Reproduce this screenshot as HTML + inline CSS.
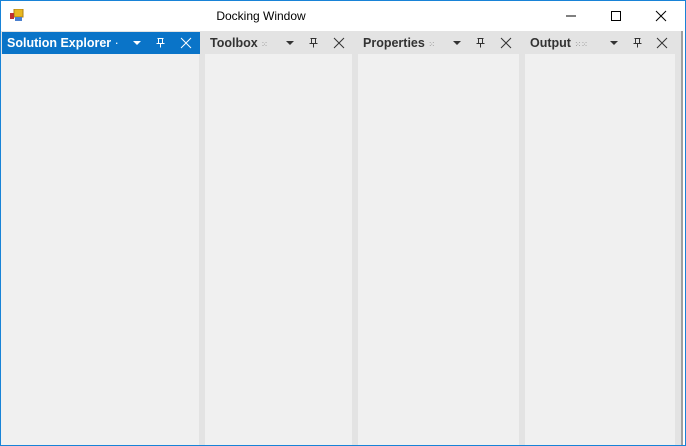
<!DOCTYPE html>
<html><head><style>
*{margin:0;padding:0;box-sizing:border-box}
body{width:686px;height:446px;overflow:hidden;background:#fff;font-family:"Liberation Sans",sans-serif;position:relative}
.win{position:absolute;left:0;top:0;width:686px;height:446px;border:1px solid #1883d7}
.t{position:absolute;top:9px;left:0;width:522px;text-align:center;font-size:12px;color:#000}
.area{position:absolute;left:1px;top:31px;width:684px;height:414px;background:#e3e3e3}
.hd{position:absolute;top:1px;height:22px;font-size:12.5px;font-weight:bold;color:#333;line-height:22px;padding-left:5px}
.body{position:absolute;top:23px;bottom:0;background:#f0f0f0}
</style></head><body>
<div class="win"></div>
<svg style="position:absolute;left:10px;top:9px" width="14" height="13"><rect x="4" y="0" width="9" height="8" fill="#e8b820" stroke="#b08010"/><rect x="0" y="4" width="4" height="6" fill="#c03030"/><rect x="5" y="8" width="7" height="4" fill="#4a80d0"/></svg>
<div class="t">Docking Window</div>
<svg style="position:absolute;left:560px;top:8px" width="112" height="16" stroke="#000" fill="none"><path d="M6 8h10"/><path d="M51.5 3.5h9v9h-9z"/><path d="M96 3l10 10M106 3l-10 10"/></svg>
<div class="area">
 <div class="hd" style="left:1px;width:198px;background:#0a74c8;color:#fff">Solution Explorer <span style="font-weight:normal">·</span></div>
 <div class="body" style="left:0;width:198px"></div>
 <div class="hd" style="left:204px;width:148px">Toolbox <span style="font-weight:normal;font-size:8px;color:#888">⁙</span></div>
 <div class="body" style="left:204px;width:147px"></div>
 <div class="hd" style="left:357px;width:162px">Properties <span style="font-weight:normal;font-size:8px;color:#888">⁙</span></div>
 <div class="body" style="left:357px;width:161px"></div>
 <div class="hd" style="left:524px;width:151px">Output <span style="font-weight:normal;font-size:8px;color:#888">⁙⁙</span></div>
 <div class="body" style="left:524px;width:150px"></div>
 <div style="position:absolute;left:680px;top:0;width:2px;height:414px;background:#a0a0a0"></div>
 <div style="position:absolute;left:682px;top:0;width:2px;height:414px;background:#fff"></div>
</div>
<svg style="position:absolute;left:0;top:32px" width="686" height="22">
 <g stroke="#fff" fill="#fff"><path d="M133 9h8l-4 4z" stroke="none"/><path d="M157.5 6.5h6M158.5 6.5v5h4v-5M156.5 11.5h8M160.5 11.5v4" fill="none"/><path d="M181 6l10 10M191 6l-10 10" fill="none"/></g>
 <g stroke="#333" fill="#333"><path d="M286 9h8l-4 4z" stroke="none"/><path d="M310.5 6.5h6M311.5 6.5v5h4v-5M309.5 11.5h8M313.5 11.5v4" fill="none"/><path d="M334 6l10 10M344 6l-10 10" fill="none"/></g>
 <g stroke="#333" fill="#333"><path d="M453 9h8l-4 4z" stroke="none"/><path d="M477.5 6.5h6M478.5 6.5v5h4v-5M476.5 11.5h8M480.5 11.5v4" fill="none"/><path d="M501 6l10 10M511 6l-10 10" fill="none"/></g>
 <g stroke="#333" fill="#333"><path d="M610 9h8l-4 4z" stroke="none"/><path d="M634.5 6.5h6M635.5 6.5v5h4v-5M633.5 11.5h8M637.5 11.5v4" fill="none"/><path d="M657 6l10 10M667 6l-10 10" fill="none"/></g>
</svg>
</body></html>
